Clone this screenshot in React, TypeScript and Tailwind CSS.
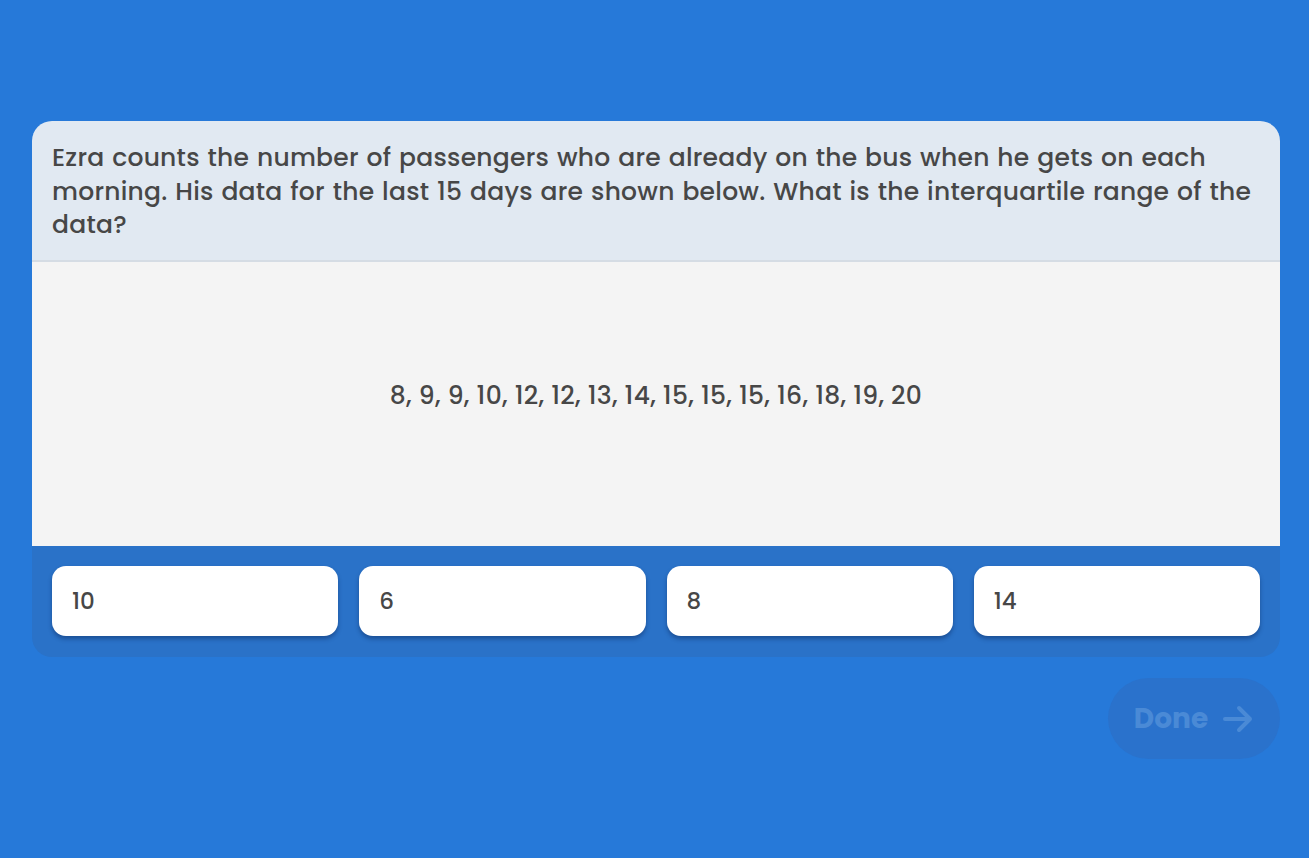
import React from "react";

const font = { fontFamily: '"Poppins", "Inter", "Noto Sans", sans-serif' };

export default function App() {
  const answers = ["10", "6", "8", "14"];
  return (
    <div className="w-[1309px] h-[858px] bg-[#2679d9] overflow-hidden" style={font}>
      <div className="pt-[121px] px-[32px] pr-[29px]">
        <div className="rounded-[20px] overflow-hidden">
          <div className="bg-[#e1e9f2] border-b-2 border-[#d5dce4] px-[20px] h-[141px] pt-[20px] text-[25px] font-medium leading-[33.5px] tracking-[0.25px] [word-spacing:1px] text-[#474747]">
            Ezra counts the number of passengers who are already on the bus when he gets on each morning. His data for the last 15 days are shown below. What is the interquartile range of the data?
          </div>
          <div className="bg-[#f4f4f4] h-[284px] pb-[16px] flex items-center justify-center text-[25px] font-medium tracking-[0.3px] text-[#474747]">
            8, 9, 9, 10, 12, 12, 13, 14, 15, 15, 15, 16, 18, 19, 20
          </div>
          <div className="bg-[#2a72c8] p-[20px] pb-[21px] grid grid-cols-4 gap-[21px]">
            {answers.map((a) => (
              <div
                key={a}
                className="bg-white h-[70px] rounded-[14px] shadow-[0_3px_4px_rgba(10,40,90,0.45)] flex items-center px-[20px] text-[23px] font-medium text-[#474747]"
              >
                {a}
              </div>
            ))}
          </div>
        </div>
        <div className="flex justify-end mt-[21px]">
          <div className="w-[172px] h-[81px] rounded-full bg-[#2a72cc] flex items-center justify-center gap-[14px] text-[#4a8ad6] text-[28px] font-bold">
            <span>Done</span>
            <svg width="32" height="28" viewBox="0 0 32 28" fill="none" stroke="#4a8ad6" strokeWidth="4" strokeLinecap="round" strokeLinejoin="round">
              <path d="M3 14h25M17 3l11 11-11 11" />
            </svg>
          </div>
        </div>
      </div>
    </div>
  );
}
